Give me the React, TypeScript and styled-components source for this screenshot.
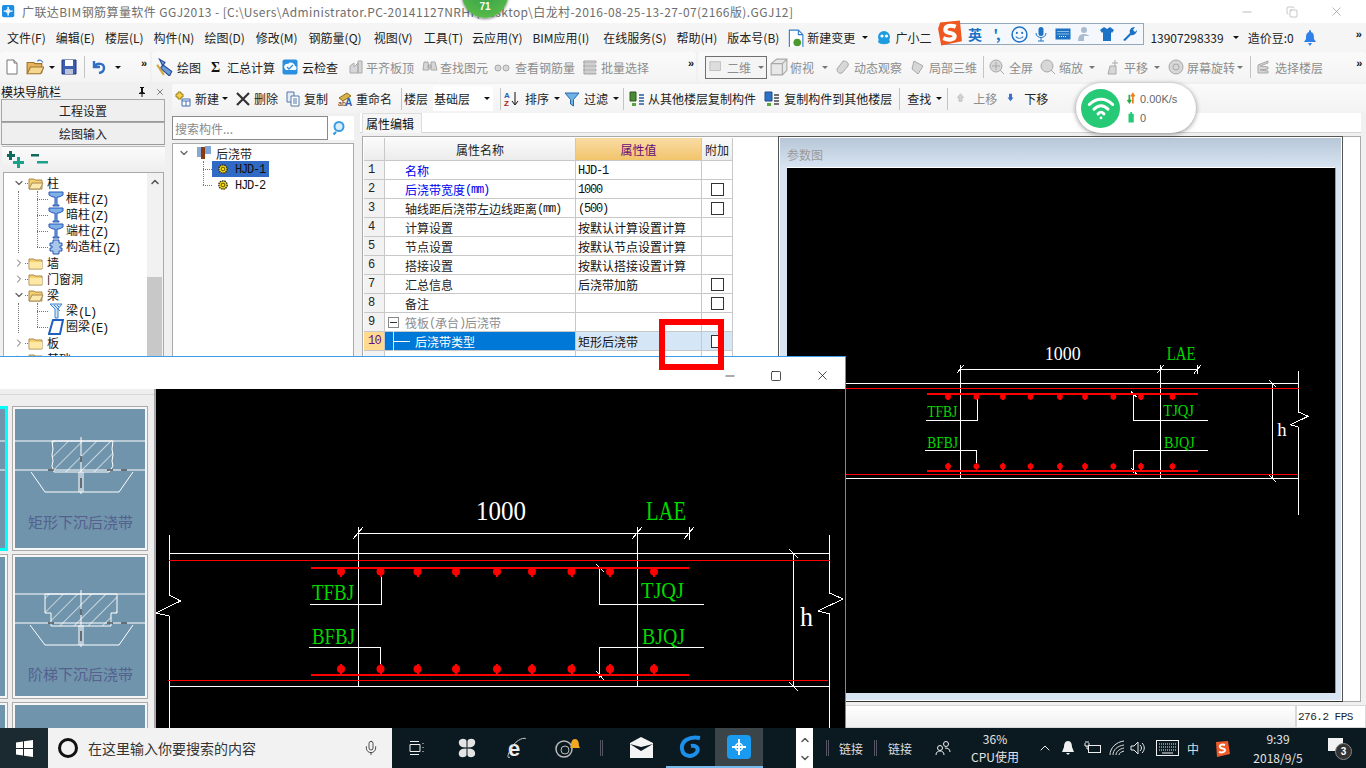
import React from "react";
import styled, { createGlobalStyle } from "styled-components";
import { Mic, ChevronUp, ChevronDown, ChevronRight, Minus, Square, X, Copy } from "lucide-react";

const Global = createGlobalStyle`
  html, body { margin: 0; padding: 0; overflow: hidden; background: #000; }
  * { box-sizing: border-box; }
  body { font-family: "Noto Sans CJK SC", "Liberation Sans", sans-serif; font-size: 12px; color: #222; }
`;

const Desktop = styled.div`
  position: relative; width: 1366px; height: 768px; overflow: hidden;
  display: flex; flex-direction: column; background: #f0f0f0;
`;
const Win = styled.div`flex: 1; min-height: 0; display: flex; flex-direction: column; background: #f0f0f0;`;
const TitleBar = styled.div`
  height: 23px; flex: none; background: #fff; display: flex; align-items: center; padding-left: 2px; position: relative;
`;
const TitleText = styled.span`margin-left: 6px; color: #6e6e6e; font-size: 12px; letter-spacing: .42px; white-space: nowrap; flex: 1; line-height: 23px;`;
const WinCtl = styled.div<{ $w: number }>`width: ${p => p.$w}px; height: 23px; display: flex; align-items: center; justify-content: center; color: #8c8c8c; flex: none; padding-right: ${p => (p.$w > 45 ? 7 : 0)}px;`;
const MenuBar = styled.div`
  height: 29px; flex: none; background: #f5f5f5; display: flex; align-items: center; padding-left: 7px; white-space: nowrap; position: relative;
`;
const MenuItem = styled.span<{ $gap?: number }>`margin-left: ${p => p.$gap ?? 10}px; &:first-child { margin-left: 0; } color: #222; display: inline-flex; align-items: center; gap: 3px;`;
const ToolRow = styled.div`height: 30px; flex: none; display: flex; align-items: center; background: #f1f1f1; white-space: nowrap; position: relative;`;
const ToolGroup = styled.div<{ $w: number; $ml?: number }>`
  width: ${p => p.$w}px; margin-left: ${p => p.$ml ?? 0}px; height: 30px; display: flex; align-items: center; flex: none;
  background: linear-gradient(#fafafa, #f4f4f4); border-radius: 3px;
`;
const Tool = styled.span<{ $ml?: number; $off?: boolean; $gap?: number }>`
  display: inline-flex; align-items: center; flex: none; gap: ${p => p.$gap ?? 3}px; margin-left: ${p => p.$ml ?? 0}px;
  color: ${p => (p.$off ? "#8d8d8d" : "#222")};
  svg { flex: none; }
`;
const Caret = styled.span<{ $ml?: number; $off?: boolean }>`
  width: 0; height: 0; flex: none; margin-left: ${p => p.$ml ?? 0}px;
  border-left: 3px solid transparent; border-right: 3px solid transparent;
  border-top: 3px solid ${p => (p.$off ? "#777" : "#111")};
`;
const Sep = styled.span<{ $ml?: number }>`width: 1px; height: 22px; flex: none; background: #c4c4c4; margin-left: ${p => p.$ml ?? 0}px;`;
const More = styled.span<{ $ml?: number }>`font-size: 11px; font-weight: 700; flex: none; line-height: 12px; margin-left: ${p => p.$ml ?? 0}px; align-self: flex-start; margin-top: 5px; color: #111; font-family: "Liberation Sans", sans-serif;`;
const ViewSelect = styled.div<{ $ml?: number }>`
  width: 62px; height: 23px; margin-left: ${p => p.$ml ?? 0}px; border: 1px solid #6f6f6f; flex: none; display: flex; align-items: center; padding-left: 3px; gap: 4px; color: #8d8d8d; background: #f4f4f4;
`;
const Body = styled.div`flex: 1; min-height: 0; margin-top: 2px; display: grid; grid-template-columns: 170px 1fr;`;
const Nav = styled.div`display: flex; flex-direction: column; padding-top: 1px; min-height: 0;`;
const NavHead = styled.div`height: 14px; flex: none; display: flex; align-items: center; line-height: 14px; font-size: 12px; padding: 0 5px 0 1px; color: #111;`;
const NavTitle = styled.span`flex: 1;`;
const NavButton = styled.div`
  height: 23px; flex: none; margin: 0 5px 0 1px; border: 1px solid #a8a8a8; border-bottom-color: #9a9a9a; background: #efefef;
  display: flex; align-items: center; justify-content: center; color: #222; &:first-of-type { margin-top: 1px; }
`;
const NavBar = styled.div`height: 26px; flex: none; margin: 1px 5px 0 2px; background: linear-gradient(#fbfbfb, #eee); display: flex; align-items: center; padding-left: 5px; gap: 6px; border-top: 1px solid #bbb;`;
const NavTree = styled.div`position: relative; flex: 1; margin: 0 6px 0 3px; background: #fff; border: 1px solid #aaa; border-bottom: 0; padding-top: 2px; overflow: hidden;`;
const NavScroll = styled.div`
  position: absolute; top: 0; right: 0; bottom: 0; width: 16px; background: #f1f1f1; display: flex; justify-content: center; padding-top: 3px; color: #555;
  &::after { content: ""; position: absolute; left: 0; right: 1px; top: 104px; bottom: 0; background: #c8c8c8; }
`;
const Branch = styled.div`
  height: 16px; display: flex; align-items: center; padding-left: 9px; gap: 0; white-space: nowrap; line-height: 16px; color: #111;
`;
const Chev = styled.span`width: 12px; flex: none; display: flex; justify-content: center; color: #666;`;
const Dots = styled.span<{ $w: number }>`width: ${p => p.$w}px; flex: none; border-top: 1px dotted #777; height: 0;`;
const Kids = styled.div`
  position: relative;
  &::before { content: ""; position: absolute; left: 14px; top: 0; bottom: 2px; border-left: 1px dotted #777; }
  &::after { content: ""; position: absolute; left: 33px; top: 0; bottom: 8px; border-left: 1px dotted #777; }
`;
const Leaf = styled.div`height: 16px; display: flex; align-items: center; padding-left: 33px; line-height: 16px; white-space: nowrap; color: #111;`;
const Label = styled.span<{ $ml?: number }>`margin-left: ${p => p.$ml ?? 0}px;`;
const M = styled.span`font-family: "Liberation Mono", monospace; letter-spacing: -1.2px; font-size: 12px; position: relative; top: 1px;`;
const Main = styled.div`display: flex; flex-direction: column; min-width: 0; min-height: 0;`;
const ToolRow2 = styled.div`height: 29px; flex: none; display: flex; align-items: center; background: linear-gradient(#fafafa, #f3f3f3); white-space: nowrap; margin-left: 2px; border-radius: 3px 0 0 3px; position: relative;`;
const FloorBox = styled.div`width: 60px; height: 25px; margin-left: 5px; flex: none; background: #fff; display: flex; align-items: center; padding-left: 1px; justify-content: space-between; padding-right: 3px;`;
const Content = styled.div`flex: 1; min-height: 0; display: flex;`;
const CompPanel = styled.div`width: 190px; flex: none; display: flex; flex-direction: column; padding: 3px 6px 0 2px;`;
const SearchRow = styled.div`height: 24px; flex: none; display: flex; align-items: center; background: #fff; padding-right: 6px; justify-content: space-between;`;
const SearchBox = styled.div`width: 156px; height: 24px; border: 1px solid #8a8a8a; color: #8a8a8a; display: flex; align-items: center; padding-left: 2px; background: #fff; font-size: 12px;`;
const CompTree = styled.div`flex: 1; margin-top: 3px; background: #fff; border: 1px solid #aaa; border-bottom: 0; padding-top: 1px; overflow: hidden; position: relative;`;
const CompRow = styled.div`height: 16px; display: flex; align-items: center; padding-left: 5px; white-space: nowrap;`;
const CompKids = styled.div`
  position: relative;
  &::before { content: ""; position: absolute; left: 30px; top: 0; height: 24px; border-left: 1px dotted #777; }
`;
const CompLeaf = styled.div`height: 16px; padding-left: 30px; display: flex; align-items: center;`;
const CompPick = styled.span<{ $on?: boolean }>`
  height: 16px; width: 57px; display: flex; align-items: center; padding-left: 5px; gap: 6px; line-height: 16px;
  background: ${p => (p.$on ? "#316ac5" : "transparent")}; color: #111;
`;
const PropPane = styled.div`flex: 1; min-width: 0; display: flex; flex-direction: column;`;
const TabBar = styled.div`height: 20px; flex: none; background: #fff; border-bottom: 1px solid #d4d4d4; margin-right: 5px; display: flex; padding-left: 2px;`;
const Tab = styled.div`width: 60px; height: 20px; background: #f6f6f6; border: 1px solid #ddd; border-bottom: 0; display: flex; align-items: center; padding-left: 3px; color: #111;`;
const PaneBody = styled.div`flex: 1; min-height: 0; margin-top: 3px; display: flex; padding-left: 2px;`;
const PropGrid = styled.div`width: 416px; flex: none; background: #fff; border-top: 1px solid #aaa; border-left: 1px solid #aaa; padding: 1px 0 0 1px; overflow: hidden;`;
const GridRow = styled.div<{ $h?: number }>`
  display: grid; grid-template-columns: 21px 191px 126px 31px; width: 369px; height: ${p => p.$h ?? 19}px; line-height: 17px;
`;
const NumCell = styled.div<{ $on?: boolean }>`
  background: ${p => (p.$on ? "#ffd98f" : "#f2f2f2")}; color: ${p => (p.$on ? "#60108a" : "#222")}; border-right: 1px solid #c8c8c8; border-bottom: 1px solid #c8c8c8; padding: 1px 0 0 4px; font-family: "Liberation Mono", monospace; font-size: 12px; letter-spacing: -.8px;
`;
const HeadCell = styled.div<{ $on?: boolean }>`
  background: ${p => (p.$on ? "linear-gradient(#f9dca4,#f2c46c)" : "linear-gradient(#fbfbfb,#ececec)")}; color: ${p => (p.$on ? "#6a0a78" : "#222")};
  border-right: 1px solid #c8c8c8; border-bottom: 1px solid #c8c8c8; display: flex; align-items: center; justify-content: center;
`;
const NameCell = styled.div<{ $tone?: string; $on?: boolean; $pl?: number }>`
  padding: 1px 0 0 ${p => p.$pl ?? 20}px; border-right: 1px solid #c8c8c8; border-bottom: 1px solid #c8c8c8; white-space: nowrap; display: flex; align-items: center;
  color: ${p => (p.$on ? "#fff" : p.$tone ?? "#222")}; background: ${p => (p.$on ? "#0078d7" : "#fff")};
`;
const ValCell = styled.div<{ $on?: boolean }>`
  padding: 0 0 0 2px; border-right: 1px solid #c8c8c8; border-bottom: 1px solid #c8c8c8; white-space: nowrap; color: #111; background: ${p => (p.$on ? "#d5e6f6" : "#fff")}; display: flex; align-items: center;
`;
const AddCell = styled.div<{ $on?: boolean }>`
  border-right: 1px solid #c8c8c8; border-bottom: 1px solid #c8c8c8; display: flex; align-items: center; justify-content: center; padding-left: 1px; background: ${p => (p.$on ? "#d5e6f6" : "#fff")};
`;
const Box = styled.span`width: 13px; height: 13px; border: 1px solid #333; background: #fff; display: block;`;
const Toggle = styled.span`width: 11px; height: 11px; border: 1px solid #888; margin: 0 6px 0 0; display: flex; align-items: center; justify-content: center; position: relative; &::after { content: ""; width: 7px; height: 1px; background: #333; }`;
const Rule = styled.span`
  width: 17px; height: 1px; background: #fff; margin: 0 5px 0 8px; flex: none; position: relative;
  &::before { content: ""; position: absolute; left: 0; top: -10px; height: 20px; width: 1px; background: #dfe8f2; }
`;
const Frame = styled.div`
  width: 565px; flex: none; border: 1px solid #555; border-bottom-color: #333; padding: 1px; height: 566px; background: #fff; overflow: hidden;
`;
const FrameIn = styled.div`height: 100%; background: linear-gradient(#b7c7d7 0, #d8e4f2 30px, #d8e4f2 100%); padding: 7px 8px 8px 7px; display: flex; flex-direction: column;`;
const FrameTitle = styled.div`height: 22px; flex: none; color: #9a9a9a; line-height: 20px;`;
const Canvas = styled.div`width: 549px; height: 526px; background: #000; border-top: 1px solid #fff; border-right: 1px solid #999; flex: none;`;
const SideStrip = styled.div`width: 18px; height: 566px; background: #fff; border: 1px solid #aaa; border-left: 0; flex: none;`;
const StatusBar = styled.div`height: 23px; flex: none; display: flex;`;
const StatusMain = styled.div`flex: 1; background: linear-gradient(#fff, #f0f0f0); border: 1px solid #d8d8d8;`;
const StatusFps = styled.div`width: 70px; flex: none; border: 1px solid #d8d8d8; background: #fff; font-family: "Liberation Mono", monospace; font-size: 11px; line-height: 22px; padding-left: 1px; color: #222; letter-spacing: -.5px; white-space: nowrap;`;

/* overlays */
const Badge = styled.div`
  position: absolute; left: 462px; top: -28px; width: 46px; height: 46px; border-radius: 50%; z-index: 6;
  background: radial-gradient(circle at 50% 35%, #2c9c4c, #55b848 75%, #7dc46a); box-shadow: 0 1px 3px rgba(0,0,0,.5);
  color: #fff; font-size: 10px; font-weight: 700; display: flex; align-items: flex-end; justify-content: center; padding-bottom: 5px; line-height: 12px; font-family: "Liberation Sans", sans-serif;
`;
const Sogou = styled.div`
  position: absolute; left: 936px; top: 21px; width: 208px; height: 26px; z-index: 5; display: flex; align-items: center;
`;
const SogouBar = styled.div`
  position: absolute; left: 8px; right: 0; top: 2px; bottom: 2px; background: #f4f8fc; border: 1px solid #93a8bb;
`;
const SogouItems = styled.div`position: relative; display: flex; align-items: center; padding-left: 28px; color: #1c72c4;`;
const SogouItem = styled.span`width: 22px; flex: none; display: flex; justify-content: center; align-items: center; font-size: 14px; font-weight: 700;`;
const SLogo = styled.span`
  position: absolute; left: 0; top: -2px; width: 27px; height: 28px;
`;
const Net = styled.div`
  position: absolute; left: 1076px; top: 83px; width: 120px; height: 50px; border-radius: 25px; background: #fff; z-index: 4;
  box-shadow: 0 1px 5px rgba(0,0,0,.45); display: flex; align-items: center; padding-left: 5px;
`;
const NetOrb = styled.div`width: 39px; height: 39px; border-radius: 50%; background: #26c975; flex: none; display: flex; align-items: center; justify-content: center;`;
const NetCol = styled.div`margin-left: 5px; display: flex; flex-direction: column; gap: 0;`;
const NetLine = styled.div`height: 19px; display: flex; align-items: center; gap: 1px; font-size: 11px; color: #666; font-family: "Liberation Sans", sans-serif;`;
const Dialog = styled.div`
  position: absolute; left: -1px; top: 356px; width: 847px; height: 372px; z-index: 2; background: #fff;
  border: 1px solid #3f9ae8; border-bottom: 0; display: flex; flex-direction: column;
`;
const DialogTitle = styled.div`height: 32px; flex: none; background: #fff; display: flex; align-items: center; justify-content: flex-end;`;
const DlgBtn = styled.div`width: 46px; height: 24px; display: flex; align-items: center; justify-content: center; color: #111; margin-top: 5px; flex: none;`;
const DialogBody = styled.div`flex: 1; min-height: 0; display: flex;`;
const ThumbCol = styled.div`width: 156px; flex: none; background: #eee; border-right: 2px solid #a8a8a8; position: relative; overflow: hidden; padding-top: 17px;
  &::before { content: ""; position: absolute; left: 0; right: 0; top: 5px; height: 1px; background: #d8d8d8; }`;
const ThumbGrid = styled.div`display: grid; grid-template-columns: 136px 136px; grid-auto-rows: 145px; gap: 3px 4px; margin-left: -128px;`;
const Thumb = styled.div<{ $on?: boolean }>`
  border: ${p => (p.$on ? "3px solid #00ffff" : "3px solid #f6f6f6")}; outline: 1px solid ${p => (p.$on ? "#f6f6f6" : "#aaa")}; outline-offset: -1px; background: #6f94ab; position: relative; height: 145px;
  ${p => (p.$on ? "outline: none;" : "")}
`;
const ThumbLabel = styled.div<{ $y: number }>`position: absolute; left: 1px; right: 0; top: ${p => p.$y}px; text-align: center; color: #55608f; font-size: 15px; line-height: 20px; white-space: nowrap;`;
const DlgCanvas = styled.div`width: 689px; flex: none; background: #000; overflow: hidden;`;
const RedMark = styled.div`position: absolute; left: 659px; top: 319px; width: 65px; height: 51px; border: 6px solid #f00; z-index: 3;`;

const Taskbar = styled.div`height: 40px; flex: none; background: #0b1a20; display: flex; align-items: center; color: #e8e8e8; position: relative; z-index: 7; white-space: nowrap;`;
const StartBtn = styled.div`width: 48px; height: 40px; flex: none; background: #1b2a31; display: flex; align-items: center; justify-content: center;`;
const SearchBar = styled.div`width: 344px; height: 40px; flex: none; background: #f2f2f2; display: flex; align-items: center; padding-left: 10px; color: #333;`;
const Ring = styled.span`width: 20px; height: 20px; border: 3px solid #111; border-radius: 50%; flex: none; margin-right: 10px;`;
const SearchText = styled.span`flex: 1; font-size: 14px;`;
const MicWrap = styled.span`width: 46px; display: flex; justify-content: flex-start; color: #333; flex: none; padding-left: 17px;`;
const TaskCell = styled.div<{ $w: number; $on?: boolean; $run?: boolean; $ml?: number }>`
  width: ${p => p.$w}px; height: 40px; flex: none; display: flex; align-items: center; justify-content: center; position: relative; margin-left: ${p => p.$ml ?? 0}px;
  background: ${p => (p.$on ? "#3a4449" : "transparent")};
  ${p => (p.$run ? `border-bottom: 2px solid #76b9ed;` : "")}
`;
const TaskSep = styled.span<{ $ml?: number }>`width: 3px; height: 16px; border-left: 1px solid #556; border-right: 1px solid #556; flex: none; margin-left: ${p => p.$ml ?? 0}px;`;
const ScrollStrip = styled.div`width: 17px; height: 40px; flex: none; margin-left: 33px; background: #fff; display: flex; flex-direction: column; align-items: center; justify-content: space-between; color: #555; padding: 6px 0 4px;`;
const TrayText = styled.span<{ $ml?: number }>`margin-left: ${p => p.$ml ?? 0}px; font-size: 12px; color: #ddd; flex: none;`;
const CpuBlock = styled.div`width: 50px; margin-left: 19px; flex: none; display: flex; flex-direction: column; align-items: center; font-size: 12px; line-height: 18px; color: #e4e4e4;`;
const TrayIcon = styled.span<{ $ml?: number }>`margin-left: ${p => p.$ml ?? 0}px; flex: none; display: flex; align-items: center; color: #eee;`;
const Clock = styled.div`width: 56px; margin-left: 20px; flex: none; display: flex; flex-direction: column; align-items: center; font-size: 12px; line-height: 19px; color: #e4e4e4;`;
const NoteBadge = styled.span`position: absolute; right: -9px; bottom: -9px; width: 17px; height: 17px; border-radius: 50%; background: #333; border: 1px solid #888; color: #fff; font-size: 10px; font-weight: 700; line-height: 15px; text-align: center; font-family: "Liberation Sans", sans-serif;`;
const NoteWrap = styled.span`position: relative; margin: -8px 0 0 22px; width: 15px; height: 13px; background: #f2f2f2; flex: none; display: block;`;

const Sketch = styled.svg`display: block; line, polyline, path, rect { vector-effect: non-scaling-stroke; }`;
const DrawText = styled.text<{ $c: string }>`fill: ${p => p.$c}; font-family: "Liberation Serif", serif;`;

const G = "#00d800";
const topDots = [341, 380.5, 417.5, 456, 497, 532, 571.5, 610, 654];
const Bead = ({ x, y }: { x: number; y: number }) => (
  <g>
    <circle cx={x} cy={y} r={4} shapeRendering="geometricPrecision" />
    <rect x={x - 1} y={y - 5} width={2} height={10} />
  </g>
);
const Drawing = ({ box, w, h }: { box: string; w: number; h: number }) => (
  <Sketch width={w} height={h} viewBox={box} preserveAspectRatio="none" shapeRendering="crispEdges">
    <g stroke="#fff" fill="none">
      <line x1="358.5" y1="527" x2="358.5" y2="686" />
      <line x1="637.5" y1="527" x2="637.5" y2="686" />
      <line x1="689.5" y1="527" x2="689.5" y2="540" />
      <line x1="358" y1="533.5" x2="690" y2="533.5" />
      <path d="M353 539l10-12M632 539l10-12M684 539l10-12" />
      <line x1="169" y1="553.5" x2="830" y2="553.5" />
      <line x1="169" y1="686.5" x2="830" y2="686.5" />
      <polyline points="169,535 169,595 180.5,601 156,613 169,616 169,737" />
      <polyline points="829.5,535 829.5,593 843,599 818,611 829.5,614 829.5,737" />
      <line x1="793.5" y1="553" x2="793.5" y2="686" />
      <path d="M789 549l9 9M789 682l9 9M596 564l8 8M596 671l8 9" />
      <polyline points="310,604.5 381.5,604.5 381.5,572" />
      <polyline points="704,604.5 599.5,604.5 599.5,568" />
      <polyline points="309,647.5 380.5,647.5 380.5,668" />
      <polyline points="704,647.5 599.5,647.5 599.5,678" />
    </g>
    <g stroke="#f00" fill="none">
      <line x1="169" y1="560.5" x2="830" y2="560.5" />
      <line x1="168" y1="680.5" x2="828" y2="680.5" />
      <line x1="311" y1="568" x2="689" y2="568" strokeWidth="2" />
      <line x1="311" y1="675" x2="689" y2="675" strokeWidth="2" />
    </g>
    <g fill="#f00">
      {topDots.map(x => <Bead key={x} x={x} y={571.5} />)}
      {topDots.map(x => <Bead key={x} x={x} y={669} />)}
    </g>
    <DrawText $c="#fff" x="476" y="520" fontSize="27" textLength="50" lengthAdjust="spacingAndGlyphs">1000</DrawText>
    <DrawText $c={G} x="646" y="520" fontSize="27" textLength="40" lengthAdjust="spacingAndGlyphs">LAE</DrawText>
    <DrawText $c={G} x="312" y="600" fontSize="23" textLength="42" lengthAdjust="spacingAndGlyphs">TFBJ</DrawText>
    <DrawText $c={G} x="641" y="598" fontSize="23" textLength="43" lengthAdjust="spacingAndGlyphs">TJQJ</DrawText>
    <DrawText $c={G} x="312" y="644" fontSize="23" textLength="43" lengthAdjust="spacingAndGlyphs">BFBJ</DrawText>
    <DrawText $c={G} x="642" y="644" fontSize="23" textLength="43" lengthAdjust="spacingAndGlyphs">BJQJ</DrawText>
    <DrawText $c="#fff" x="800" y="626" fontSize="27" textLength="13" lengthAdjust="spacingAndGlyphs">h</DrawText>
  </Sketch>
);

const ThumbArt = ({ stepped }: { stepped?: boolean }) => {
  const id = stepped ? "hb" : "ha";
  const y1 = stepped ? 37 : 32;
  const y2 = stepped ? 66 : 61;
  const shape = stepped
    ? `M30 ${y1}H102V56H96V${y2 + 3}H36V56H30Z`
    : `M37 ${y1}H98L97 40 98 46 97 52 98 ${y2 - 4}L94 ${y2 + 2}H39L37 ${y2 - 4}L38 52 37 46 38 40Z`;
  const d = stepped ? 5 : 0;
  return (
    <Sketch width="130" height="139" viewBox="0 0 130 139">
      <defs>
        <pattern id={id} width="10" height="10" patternUnits="userSpaceOnUse" patternTransform="rotate(45)">
          <line x1="0" y1="0" x2="0" y2="10" stroke="#fff" strokeWidth="1.2" />
        </pattern>
      </defs>
      <path d={shape} fill={`url(#${id})`} stroke="#fff" />
      <g stroke="#fff" fill="none">
        <line x1="0" y1={y1} x2="130" y2={y1} />
        <line x1="0" y1={y2} x2="130" y2={y2} />
        <line x1="66" y1={y1 - 4} x2="66" y2={83 + d + 2} />
        <line x1="64" y1={y2 + 2} x2="64" y2={83 + d} />
        <line x1="68" y1={y2 + 2} x2="68" y2={83 + d} />
        <polyline points={`${16 - (d ? 1 : 0)},${y2 + 2} 30,${83 + d} 104,${83 + d} 118,${y2 + 2}`} />
      </g>
      <g stroke="#111" strokeWidth="1">
        <line x1="33" y1={y2} x2="39" y2={y2} /><line x1="92" y1={y2} x2="98" y2={y2} />
        <line x1="106" y1={y2} x2="112" y2={y2} /><line x1="66" y1={y2 - 14} x2="66" y2={y2 - 8} />
        <line x1="66" y1={y2 + 8} x2="66" y2={y2 + 18} />
      </g>
    </Sketch>
  );
};

/* small icons */
const S = ({ s = 16, vb = "0 0 16 16", children }: { s?: number; vb?: string; children: React.ReactNode }) => (
  <svg width={s} height={s} viewBox={vb}>{children}</svg>
);
const Folder = ({ open }: { open?: boolean }) => (
  <S>
    <path d="M1 4h5l1 1h7v9H1z" fill="#f5cf6a" stroke="#a88a50" />
    {open ? <path d="M1 14l3-6h11l-3 6z" fill="#fbe9b0" stroke="#a88a50" /> : <path d="M1.5 7h12.5v6.5H1.5z" fill="#fde9a5" />}
  </S>
);
const Pillar = () => (
  <S><path d="M1 1h14v3l-4 2H9v8h2v1H5v-1h2V6H5L1 4z" fill="#7fb0e8" stroke="#2557b5" /></S>
);
const Puzzle = () => (
  <S><path d="M5 1h6v3h3v3h-2v2h2v3h-3v3H5v-3H2V9h2V7H2V4h3z" fill="#a8c6ea" stroke="#2557b5" /></S>
);
const Beam = () => (
  <S><path d="M2 1h12L10 6v9H7V6z" fill="#cfe3f7" stroke="#3f84cf" /><path d="M6 2l6 6M9 2l2 2" stroke="#3f84cf" /></S>
);
const Ring2 = () => (
  <S><path d="M5 1h10l-3 14H1z" fill="#fff" stroke="#1f5fbf" strokeWidth="2" /></S>
);
const Gear = () => (
  <S s={12}>
    <circle cx="8" cy="8" r="5.5" fill="#ffe000" stroke="#333" strokeDasharray="2 1" strokeWidth="2" />
    <circle cx="8" cy="8" r="2.5" fill="#ffe000" stroke="#222" />
  </S>
);
const Doc = () => <S><path d="M3 1h7l3 3v11H3z" fill="#fff" stroke="#777" /><path d="M10 1v3h3" fill="#ddd" stroke="#777" /></S>;
const OpenF = () => <S s={18}><path d="M1 4h6l1 1h6v8H1z" fill="#e9b45c" stroke="#9a7430" /><path d="M1 14l3-6h12l-3 6z" fill="#f5d88e" stroke="#9a7430" /><path d="M10 3c2-2 4-1 5 1" stroke="#4a7bc2" fill="none" /></S>;
const Save = () => <S><path d="M1 1h14v14H1z" fill="#3c5fb0" stroke="#22367a" /><path d="M4 1h8v6H4z" fill="#fff" /><path d="M4 10h8v5H4z" fill="#b9c3dc" /></S>;
const Undo = () => <S><path d="M3 2v6h6M3.5 7.5C6 3.5 13 4 13 9c0 2.5-2 4.5-5 5" fill="none" stroke="#2f6fc4" strokeWidth="2.4" /></S>;
const Draw = () => <S s={18}><path d="M3 1l5 3-2 3zM6 6l8 6-2 4-8-7z" fill="#6d9cdb" stroke="#2a4f94" /><path d="M1 6l6 9" stroke="#d3a93a" strokeWidth="2" /></S>;
const Cloud = () => <S><rect x="0.5" y="0.5" width="15" height="15" rx="2" fill="#2b90e0" /><path d="M3 10a3 3 0 013-5 4 4 0 017 2 2 2 0 01-1 4H4z" fill="#fff" /><path d="M5 8l2 2 4-4" stroke="#2b90e0" fill="none" strokeWidth="1.3" /></S>;
const Ghost = ({ d }: { d: string }) => <S><path d={d} fill="#d7d7d7" stroke="#a8a8a8" /></S>;
const gA = "M2 14V7l4-3v4l4-4v10zM10 2h4v12h-4z";
const gB = "M2 3h4l1 8H1zM9 3h4l2 8H9zM6 6h3v3H6z";
const gC = "M1 9a3 3 0 016 0 3 3 0 01-6 0zM9 9a3 3 0 016 0 3 3 0 01-6 0z";
const gD = "M2 2h12v2H2zM2 6h12v2H2zM2 10h12v2H2zM2 14h12v1H2zM2 2v13";
const gE = "M1 5l5-4h9v10l-4 4H1zM1 5h10v10M11 5l4-4";
const gF = "M8 2c4 0 6 2 5 5l-6 7c-3 1-5-1-5-4z";
const gG = "M4 2l9 5-5 8-6-5z";
const gH = "M7 1a6 6 0 100 12A6 6 0 007 1zM7 3v8M3 7h8M11 11l4 4";
const gI = "M7 1a6 6 0 100 12A6 6 0 007 1zM11 11l4 4";
const gJ = "M5 7h6v8H3zM10 1v6M7 4h6";
const gK = "M8 1a7 7 0 100 14A7 7 0 008 1zM8 5a3 3 0 100 6 3 3 0 000-6z";
const gL = "M2 6l10-4v2L4 7l8 1v2L4 11l8 1v2H2z";
const NewComp = () => <S><path d="M3 1h3v2h2v3H6v2H3V6H1V3h2z" fill="#f4d24a" stroke="#9a7d20" /><path d="M7 8h8v7H7z" fill="#fff" stroke="#3f6fb0" /><path d="M7 10h8M11 10v5" stroke="#3f6fb0" /></S>;
const Del = () => <S><path d="M2 2l12 12M14 2L2 14" stroke="#333" strokeWidth="2.2" /></S>;
const CopyI = () => <S><path d="M2 1h7v10H2z" fill="#e6eef8" stroke="#5577a8" /><path d="M6 5h8v10H6z" fill="#fff" stroke="#5577a8" /><path d="M8 8h4M8 10h4M8 12h4" stroke="#5577a8" /></S>;
const Rename = () => <S><path d="M2 7l8-5 4 3-8 5z" fill="#d8b24a" stroke="#8a6d1e" /><text x="1" y="15" fontSize="7" fill="#333" fontFamily="Liberation Sans">ab</text><text x="8" y="15" fontSize="10" fontWeight="700" fill="#2b5db0" fontFamily="Liberation Sans">A</text></S>;
const Sort = () => <S><text x="0" y="7" fontSize="8" fill="#2b5db0" fontWeight="700" fontFamily="Liberation Sans">A</text><text x="0" y="15" fontSize="8" fill="#b02020" fontWeight="700" fontFamily="Liberation Sans">Z</text><path d="M11 1v12M8 10l3 4 3-4" stroke="#111" fill="none" /></S>;
const Filter = () => <S><path d="M1 2h14L9.5 8.5V15l-3-2V8.5z" fill="#6fb2e8" stroke="#2867ae" /></S>;
const CopyFloor = () => <S><path d="M1 1h6v9H1z" fill="#4c8a35" stroke="#2f5c1e" /><path d="M3 12h4v3H3z" fill="#5aa53e" /><path d="M10 4h5M10 7h5M10 10h5M10 13h5" stroke="#2a5c9c" strokeWidth="1.6" /></S>;
const CopyFloor2 = () => <S><path d="M1 1h7v9H1z" fill="#2f6fc4" stroke="#1e4c8c" /><path d="M3 12h4v3H3z" fill="#5aa53e" /><path d="M10 4h5M10 7h5M10 10h5M10 13h5" stroke="#444" strokeWidth="1.6" /></S>;
const ArrUp = () => <S s={12}><path d="M6 1l4 5H8v5H4V6H2z" fill="#d4d4d4" stroke="#b4b4b4" /></S>;
const ArrDown = () => <S s={12}><path d="M6 11L2 6h2V1h4v5h2z" fill="#3f6fc8" /></S>;
const Change = () => <S s={18}><path d="M3 1h8l4 4v12H3z" fill="#fff" stroke="#2f7fd0" /><path d="M11 1v4h4" fill="none" stroke="#2f7fd0" /><circle cx="10" cy="12" r="3.4" fill="#4c9a2e" /></S>;
const Xiao = () => <S><circle cx="8" cy="7" r="6" fill="#1f9be0" /><path d="M2 12c2 3 10 3 12 0l-1-3H3z" fill="#1f9be0" /><circle cx="6" cy="6" r="1.6" fill="#fff" /><circle cx="10.5" cy="6" r="1.6" fill="#fff" /></S>;
const BellB = () => <S><path d="M8 0c1 0 1 1 1 2 3 1 3 4 3 7l2 3H2l2-3c0-3 0-6 3-7 0-1 0-2 1-2zM6 13h4l-2 3z" fill="#2f80e8" /></S>;
const Plus2 = () => <S s={18} vb="0 0 18 18"><path d="M2 0h3v3h3v3H5v3H2V6H-1V3h3z" fill="#0e6a5b" /><path d="M10 6h3v4h4v3h-4v4h-3v-4H6v-3h4z" fill="#1ba08a" /></S>;
const Minus2 = () => <S s={18} vb="0 0 18 18"><path d="M0 3h8v2.500H0z" fill="#0e6a5b" /><path d="M6 10h11v2.500H6z" fill="#1ba08a" /></S>;
const Pin = () => <S s={10} vb="0 0 10 10"><path d="M3 0h4v1H6v4l2 1v1H5.500v3h-1V7H2V6l2-1V1H3z" fill="#111" /></S>;
const Loupe = () => <S><circle cx="7" cy="6.500" r="4.500" fill="#d9eefc" stroke="#3a9be0" strokeWidth="2" /><path d="M4 12l-2.500 2.500" stroke="#3a9be0" strokeWidth="2.400" /></S>;
const AppIcon = () => <S s={14}><rect width="14" height="14" rx="2" fill="#1b8fe8" /><path d="M7 2v10M2 7h10" stroke="#fff" strokeWidth="1.600" /><circle cx="7" cy="7" r="2.200" fill="none" stroke="#fff" /></S>;

const Wifi = ({ s, c }: { s: number; c: string }) => (
  <svg width={s} height={s} viewBox="0 0 24 24" fill="none" stroke={c} strokeWidth="2.600" strokeLinecap="round">
    <path d="M2 9c6-6 14-6 20 0M6 13c4-4 8-4 12 0M9.500 17c2-2 3-2 5 0" /><circle cx="12" cy="20.500" r="1.200" fill={c} stroke="none" />
  </svg>
);

const menus: [string, number][] = [["文件(F)", 0], ["编辑(E)", 10], ["楼层(L)", 10], ["构件(N)", 10], ["绘图(D)", 10], ["修改(M)", 11], ["钢筋量(Q)", 11], ["视图(V)", 12], ["工具(T)", 11], ["云应用(Y)", 9], ["BIM应用(I)", 10], ["在线服务(S)", 14], ["帮助(H)", 10], ["版本号(B)", 10]];
const rows: { n: string; name: React.ReactNode; val?: React.ReactNode; box?: boolean; tone?: string }[] = [
  { n: "1", name: "名称", val: <M>HJD-1</M>, tone: "#0000f0" },
  { n: "2", name: <>后浇带宽度<M>(mm)</M></>, val: <M>1000</M>, box: true, tone: "#0000f0" },
  { n: "3", name: <>轴线距后浇带左边线距离<M>(mm)</M></>, val: <M>(500)</M>, box: true },
  { n: "4", name: "计算设置", val: "按默认计算设置计算" },
  { n: "5", name: "节点设置", val: "按默认节点设置计算" },
  { n: "6", name: "搭接设置", val: "按默认搭接设置计算" },
  { n: "7", name: "汇总信息", val: "后浇带加筋", box: true },
  { n: "8", name: "备注", box: true },
];
const Closed = () => <Chev><ChevronRight size={12} strokeWidth={2} /></Chev>;
const Opened = () => <Chev><ChevronDown size={12} strokeWidth={2.5} /></Chev>;

export default function App() {
  return (
    <Desktop>
      <Global />
      <Win>
        <TitleBar>
          <AppIcon />
          <TitleText>广联达BIM钢筋算量软件 GGJ2013 - [C:\Users\Administrator.PC-20141127NRHI\Desktop\白龙村-2016-08-25-13-27-07(2166版).GGJ12]</TitleText>
          <WinCtl $w={45}><Minus size={14} strokeWidth={1} /></WinCtl>
          <WinCtl $w={45}><Copy size={12} strokeWidth={1} /></WinCtl>
          <WinCtl $w={52}><X size={15} strokeWidth={1} /></WinCtl>
        </TitleBar>
        <MenuBar>
          {menus.map(([m, g]) => <MenuItem key={m} $gap={g}>{m}</MenuItem>)}
          <MenuItem $gap={7}><Change />新建变更</MenuItem>
          <Caret $ml={7} />
          <MenuItem $gap={8}><Xiao />广小二</MenuItem>
          <MenuItem $gap={219}>13907298339</MenuItem>
          <Caret $ml={9} />
          <MenuItem $gap={9}>造价豆:0</MenuItem>
          <MenuItem $gap={8}><BellB /></MenuItem>
          <More $ml={38}>»</More>
        </MenuBar>
        <ToolRow>
          <ToolGroup $w={150}>
            <Tool $ml={4}><Doc /></Tool>
            <Tool $ml={6}><OpenF /></Tool>
            <Caret $ml={5} />
            <Tool $ml={6}><Save /></Tool>
            <Sep $ml={7} />
            <Tool $ml={6}><Undo /></Tool>
            <Caret $ml={8} />
            <More $ml={20}>»</More>
          </ToolGroup>
          <ToolGroup $w={544} $ml={2}>
            <Tool $ml={4}><Draw />绘图</Tool>
            <Tool $ml={9} $gap={1}><S><text x="1" y="13" fontSize="14" fontWeight="700" fill="#111" fontFamily="Liberation Serif">Σ</text></S>汇总计算</Tool>
            <Tool $ml={7} $gap={4}><Cloud />云检查</Tool>
            <Tool $ml={10} $off $gap={2}><Ghost d={gA} />平齐板顶</Tool>
            <Tool $ml={8} $off $gap={2}><Ghost d={gB} />查找图元</Tool>
            <Tool $ml={6} $off $gap={5}><Ghost d={gC} />查看钢筋量</Tool>
            <Tool $ml={7} $off><Ghost d={gD} />批量选择</Tool>
            <More $ml={39}>»</More>
          </ToolGroup>
          <ToolGroup $w={668} $ml={2}>
            <ViewSelect $ml={7}><S s={14}><rect x="1" y="2" width="12" height="10" fill="#ddd" stroke="#bbb" /></S>二维<Caret $ml={3} $off /></ViewSelect>
            <Tool $ml={3} $off $gap={2}><S s={18}><path d={gE} fill="#e8e8e8" stroke="#a8a8a8" /></S>俯视</Tool>
            <Caret $ml={8} $off />
            <Tool $ml={7} $off><Ghost d={gF} />动态观察</Tool>
            <Tool $ml={8} $off><Ghost d={gG} />局部三维</Tool>
            <Sep $ml={6} />
            <Tool $ml={5} $off $gap={4}><Ghost d={gH} />全屏</Tool>
            <Tool $ml={7} $off $gap={3}><Ghost d={gI} />缩放</Tool>
            <Caret $ml={6} $off />
            <Tool $ml={10} $off><Ghost d={gJ} />平移</Tool>
            <Caret $ml={6} $off />
            <Tool $ml={8} $off><Ghost d={gK} />屏幕旋转</Tool>
            <Caret $ml={2} $off />
            <Sep $ml={7} />
            <Tool $ml={5} $off><Ghost d={gL} />选择楼层</Tool>
            <More $ml={33}>»</More>
          </ToolGroup>
        </ToolRow>
        <Body>
          <Nav>
            <NavHead>
              <NavTitle>模块导航栏</NavTitle>
              <Pin /><Label $ml={8}><X size={10} strokeWidth={1.2} /></Label>
            </NavHead>
            <NavButton>工程设置</NavButton>
            <NavButton>绘图输入</NavButton>
            <NavBar><Plus2 /><Minus2 /></NavBar>
            <NavTree>
              <NavScroll><ChevronUp size={12} strokeWidth={3} /></NavScroll>
              <Branch><Opened /><Dots $w={3} /><Folder open /><Label $ml={3}>柱</Label></Branch>
              <Kids>
                {["框柱", "暗柱", "端柱"].map(t => (
                  <Leaf key={t}><Dots $w={11} /><Pillar /><Label $ml={2}>{t}<M>(Z)</M></Label></Leaf>
                ))}
                <Leaf><Dots $w={11} /><Puzzle /><Label $ml={2}>构造柱<M>(Z)</M></Label></Leaf>
              </Kids>
              <Branch><Closed /><Dots $w={3} /><Folder /><Label $ml={3}>墙</Label></Branch>
              <Branch><Closed /><Dots $w={3} /><Folder /><Label $ml={3}>门窗洞</Label></Branch>
              <Branch><Opened /><Dots $w={3} /><Folder open /><Label $ml={3}>梁</Label></Branch>
              <Kids>
                <Leaf><Dots $w={11} /><Beam /><Label $ml={2}>梁<M>(L)</M></Label></Leaf>
                <Leaf><Dots $w={11} /><Ring2 /><Label $ml={2}>圈梁<M>(E)</M></Label></Leaf>
              </Kids>
              <Branch><Closed /><Dots $w={3} /><Folder /><Label $ml={3}>板</Label></Branch>
              <Branch><Closed /><Dots $w={3} /><Folder /><Label $ml={3}>基础</Label></Branch>
            </NavTree>
          </Nav>
          <Main>
            <ToolRow2>
              <Tool $ml={3} $gap={4}><NewComp />新建</Tool>
              <Caret $ml={3} />
              <Tool $ml={7} $gap={3}><Del />删除</Tool>
              <Tool $ml={7} $gap={3}><CopyI />复制</Tool>
              <Tool $ml={9} $gap={3}><Rename />重命名</Tool>
              <Sep $ml={9} />
              <Tool $ml={2}>楼层</Tool>
              <FloorBox>基础层<Caret /></FloorBox>
              <Sep $ml={7} />
              <Tool $ml={3} $gap={5}><Sort />排序</Tool>
              <Caret $ml={5} />
              <Tool $ml={4} $gap={4}><Filter />过滤</Tool>
              <Caret $ml={5} />
              <Sep $ml={4} />
              <Tool $ml={5} $gap={3}><CopyFloor />从其他楼层复制构件</Tool>
              <Tool $ml={8} $gap={4}><CopyFloor2 />复制构件到其他楼层</Tool>
              <Sep $ml={7} />
              <Tool $ml={7}>查找</Tool>
              <Caret $ml={5} />
              <Sep $ml={5} />
              <Tool $ml={8} $off $gap={5}><ArrUp />上移</Tool>
              <Tool $ml={9} $gap={6}><ArrDown />下移</Tool>
            </ToolRow2>
            <Content>
              <CompPanel>
                <SearchRow>
                  <SearchBox>搜索构件...</SearchBox>
                  <Loupe />
                </SearchRow>
                <CompTree>
                  <CompRow>
                    <ChevronDown size={12} strokeWidth={2.5} color="#666" />
                    <Label $ml={6}><S><path d="M1 3h8v10H1z" fill="#8aa7cf" /><path d="M5 3h4v12H5z" fill="#8a3a12" /><path d="M9 2h6v8H9z" fill="#7fa6d8" /></S></Label>
                    <Label $ml={4}>后浇带</Label>
                  </CompRow>
                  <CompKids>
                    <CompLeaf><Dots $w={9} /><CompPick $on><Gear /><M>HJD-1</M></CompPick></CompLeaf>
                    <CompLeaf><Dots $w={9} /><CompPick><Gear /><M>HJD-2</M></CompPick></CompLeaf>
                  </CompKids>
                </CompTree>
              </CompPanel>
              <PropPane>
                <TabBar><Tab>属性编辑</Tab></TabBar>
                <PaneBody>
                  <PropGrid>
                    <GridRow $h={23}>
                      <HeadCell />
                      <HeadCell>属性名称</HeadCell>
                      <HeadCell $on>属性值</HeadCell>
                      <HeadCell>附加</HeadCell>
                    </GridRow>
                    {rows.map(r => (
                      <GridRow key={r.n}>
                        <NumCell>{r.n}</NumCell>
                        <NameCell $tone={r.tone}>{r.name}</NameCell>
                        <ValCell>{r.val}</ValCell>
                        <AddCell>{r.box && <Box />}</AddCell>
                      </GridRow>
                    ))}
                    <GridRow>
                      <NumCell>9</NumCell>
                      <NameCell $tone="#8d8d8d" $pl={3}><Toggle />筏板<M>(</M>承台<M>)</M>后浇带</NameCell>
                      <ValCell />
                      <AddCell />
                    </GridRow>
                    <GridRow>
                      <NumCell $on>10</NumCell>
                      <NameCell $on $pl={0}><Rule />后浇带类型</NameCell>
                      <ValCell $on>矩形后浇带</ValCell>
                      <AddCell $on><Box /></AddCell>
                    </GridRow>
                    <GridRow>
                      <NumCell />
                      <NameCell />
                      <ValCell />
                      <AddCell />
                    </GridRow>
                  </PropGrid>
                  <Frame>
                    <FrameIn>
                      <FrameTitle>参数图</FrameTitle>
                      <Canvas>
                        <Drawing box="116.5 251.4 764 735" w={548} h={525} />
                      </Canvas>
                    </FrameIn>
                  </Frame>
                  <SideStrip />
                </PaneBody>
              </PropPane>
            </Content>
            <StatusBar>
              <StatusMain />
              <StatusFps>276.2 FPS</StatusFps>
            </StatusBar>
          </Main>
        </Body>
      </Win>

      <Badge>71</Badge>
      <Sogou>
        <SogouBar />
        <SLogo>
          <svg width="27" height="28" viewBox="0 0 26 26">
            <path d="M4 3l19-2 2 20-20 4-3-16z" fill="#f0561f" />
            <path d="M19 7c-5-2-10-1-10 3 0 4 9 2 9 6 0 4-6 4-11 2" fill="none" stroke="#fff" strokeWidth="4" />
          </svg>
        </SLogo>
        <SogouItems>
          <SogouItem>英</SogouItem>
          <SogouItem>',</SogouItem>
          <SogouItem><S s={17}><circle cx="8" cy="8" r="7" fill="none" stroke="#1c72c4" strokeWidth="1.4" /><circle cx="5.5" cy="6.5" r="1" fill="#1c72c4" /><circle cx="10.5" cy="6.5" r="1" fill="#1c72c4" /><path d="M4.500 10c2 2 5 2 7 0" fill="none" stroke="#1c72c4" /></S></SogouItem>
          <SogouItem><S><rect x="5.5" y="1" width="5" height="9" rx="2.5" fill="#1c72c4" /><path d="M3 7c0 6 10 6 10 0M8 12v3M5 15h6" fill="none" stroke="#1c72c4" /></S></SogouItem>
          <SogouItem><S><rect x="0.5" y="2.5" width="15" height="11" fill="#1c72c4" /><path d="M2.500 5.500h11M2.500 8h11M4 10.500h8" stroke="#fff" strokeDasharray="1 1" /></S></SogouItem>
          <SogouItem><S><circle cx="7" cy="4" r="3" fill="#a9bdd0" /><path d="M1 15c0-6 3-7 6-7s5 1 5 2H7v5z" fill="#a9bdd0" /></S></SogouItem>
          <SogouItem><S><path d="M5 1L1 4l2 3 1-1v9h8V6l1 1 2-3-4-3-3 2z" fill="#1c72c4" /></S></SogouItem>
          <SogouItem><S><path d="M2 14l7-7c-1-3 1-6 5-6l-2 3 2 2 2-2c0 3-3 6-6 5l-6 6z" fill="#1c72c4" /></S></SogouItem>
        </SogouItems>
      </Sogou>
      <Net>
        <NetOrb><Wifi s={28} c="#fff" /></NetOrb>
        <NetCol>
          <NetLine>
            <S s={14}><path d="M5 1v8M3 7l2 3 2-3" stroke="#2aa84a" fill="none" strokeWidth="2" transform="translate(0 2)" /><path d="M9 13V3M7 5l2-3 2 3" stroke="#f08020" fill="none" strokeWidth="2" /></S>
            0.00K/s
          </NetLine>
          <NetLine>
            <S s={14}><path d="M4 3h6v10H4zM6 1h2v2H6z" fill="#26c975" /></S>
            0
          </NetLine>
        </NetCol>
      </Net>

      <Dialog>
        <DialogTitle>
          <DlgBtn><Minus size={14} strokeWidth={1.2} /></DlgBtn>
          <DlgBtn><Square size={12} strokeWidth={1.5} /></DlgBtn>
          <DlgBtn><X size={15} strokeWidth={1.2} /></DlgBtn>
        </DialogTitle>
        <DialogBody>
          <ThumbCol>
            <ThumbGrid>
              <Thumb $on><ThumbArt /></Thumb>
              <Thumb><ThumbArt /><ThumbLabel $y={103}>矩形下沉后浇带</ThumbLabel></Thumb>
              <Thumb />
              <Thumb><ThumbArt stepped /><ThumbLabel $y={107}>阶梯下沉后浇带</ThumbLabel></Thumb>
              <Thumb />
              <Thumb />
            </ThumbGrid>
          </ThumbCol>
          <DlgCanvas>
            <Drawing box="156 389 689 339" w={689} h={339} />
          </DlgCanvas>
        </DialogBody>
      </Dialog>
      <RedMark />

      <Taskbar>
        <StartBtn>
          <svg width="17" height="17" viewBox="0 0 17 17"><path d="M0 2.500l7-1V8H0zM8 1.300L17 0v8H8zM0 9h7v6.500l-7-1zM8 9h9v8l-9-1.300z" fill="#fff" /></svg>
        </StartBtn>
        <SearchBar>
          <Ring />
          <SearchText>在这里输入你要搜索的内容</SearchText>
          <MicWrap><Mic size={16} strokeWidth={1.3} /></MicWrap>
        </SearchBar>
        <TaskCell $w={50}><svg width="16" height="16" viewBox="0 0 16 16" fill="none" stroke="#eee"><path d="M1 1.500h9M1 14.500h9M1 4.500h10v7H1zM14 3v1M14 7v1M14 11v1" /></svg></TaskCell>
        <TaskCell $w={50}><svg width="22" height="22" viewBox="0 0 22 22"><path d="M11 11C5 11 2 8 3 4c2-3 6-3 8 0 2-3 7-3 8 0 1 4-2 7-8 7zM11 11c6 0 9 3 8 7-2 3-6 3-8 0-2 3-7 3-8 0-1-4 2-7 8-7z" fill="#e4e4e4" /><path d="M11 2v18M2 11h18" stroke="#0b1a20" /></svg></TaskCell>
        <TaskCell $w={50}><svg width="22" height="24" viewBox="0 0 22 24"><text x="2" y="20" fontSize="22" fontWeight="700" fill="#eee" fontFamily="Liberation Sans">e</text><path d="M4 21C1 23 1 19 6 11S19 1 20 3" fill="none" stroke="#ccc" /></svg></TaskCell>
        <TaskCell $w={50}><svg width="30" height="28" viewBox="0 0 30 28"><circle cx="12" cy="15" r="8" fill="none" stroke="#bbb" strokeWidth="1.5" /><circle cx="13" cy="16" r="4" fill="none" stroke="#bbb" /><path d="M19 12c0-4 1-7 4-7s4 3 4 7l1 2H18z" fill="#f2a91f" /></svg></TaskCell>
        <TaskSep $ml={8} />
        <TaskCell $w={49} $ml={14}><svg width="25" height="24" viewBox="0 0 25 24"><path d="M1 7l11-6 12 6v15H1z" fill="#f4f4f4" /><path d="M1 8l11 7 12-7-12 3z" fill="#0b1a20" /></svg></TaskCell>
        <TaskCell $w={49} $run><svg width="24" height="24" viewBox="0 0 24 24"><path d="M21 3C10 1 2 6 3 14c1 8 11 9 15 3 2-4-1-7-6-6" fill="none" stroke="#1e8fe8" strokeWidth="4" /></svg></TaskCell>
        <TaskCell $w={48} $on $run><svg width="24" height="24" viewBox="0 0 24 24"><rect width="24" height="24" rx="4" fill="#1b9bf0" /><path d="M12 4v16M5 12h14" stroke="#fff" strokeWidth="2" /><circle cx="12" cy="12" r="3.5" fill="none" stroke="#fff" strokeWidth="1.5" /></svg></TaskCell>
        <ScrollStrip><ChevronUp size={12} strokeWidth={3} /><ChevronDown size={12} strokeWidth={3} /></ScrollStrip>
        <TaskSep $ml={13} />
        <TrayText $ml={10}>链接</TrayText>
        <TaskSep $ml={11} />
        <TrayText $ml={11}>链接</TrayText>
        <TrayIcon $ml={23}><svg width="16" height="16" viewBox="0 0 16 16" fill="none" stroke="#eee"><circle cx="11" cy="4" r="2.500" /><circle cx="5" cy="8" r="2.500" /><path d="M1 15c0-3 2-4 4-4s4 1 4 4M10 8c3 0 5 1 5 4" /></svg></TrayIcon>
        <CpuBlock><span>36%</span><span>CPU使用</span></CpuBlock>
        <TrayIcon $ml={17}><ChevronUp size={16} strokeWidth={1.5} /></TrayIcon>
        <TrayIcon $ml={8}><svg width="14" height="16" viewBox="0 0 14 16"><path d="M7 1c3 0 4 3 4 6l2 5H1l2-5c0-3 1-6 4-6zM5 13h4l-2 2z" fill="#f0f0f0" /></svg></TrayIcon>
        <TrayIcon $ml={9}><svg width="18" height="16" viewBox="0 0 18 16" fill="none" stroke="#eee"><rect x="4.500" y="5.500" width="12" height="7" /><path d="M1 3v3h4V3M3 6v3h2M2 1v2M4 1v2" /></svg></TrayIcon>
        <TrayIcon $ml={7}><svg width="16" height="16" viewBox="0 0 16 16" fill="none" stroke="#ddd"><path d="M1 15C1 8 7 2 15 1M4 15c0-5 4-9 11-10M7 15c0-3 3-6 8-7M10 15c0-2 2-3 5-4" /></svg></TrayIcon>
        <TrayIcon $ml={5}><svg width="16" height="16" viewBox="0 0 16 16" fill="none" stroke="#eee"><path d="M1 6h3l4-4v12l-4-4H1zM10 5c2 2 2 4 0 6M12 3c3 3 3 7 0 10" /></svg></TrayIcon>
        <TrayIcon $ml={10}><svg width="23" height="16" viewBox="0 0 23 16" fill="none" stroke="#eee"><rect x=".5" y=".5" width="22" height="15" /><path d="M3 4h17M3 7h17M3 10h17" strokeDasharray="1 1" /><path d="M6 13h11" /></svg></TrayIcon>
        <TrayText $ml={8}>中</TrayText>
        <TrayIcon $ml={15}><svg width="16" height="17" viewBox="0 0 16 17"><path d="M2 2l12-1 2 13-13 3z" fill="#ef5a28" /><path d="M11 5c-3-1-6 0-5 2 0 2 5 1 5 3 0 2-3 3-6 2" fill="none" stroke="#fff" strokeWidth="2" /></svg></TrayIcon>
        <Clock><span>9:39</span><span>2018/9/5</span></Clock>
        <NoteWrap><NoteBadge>3</NoteBadge></NoteWrap>
      </Taskbar>
    </Desktop>
  );
}
